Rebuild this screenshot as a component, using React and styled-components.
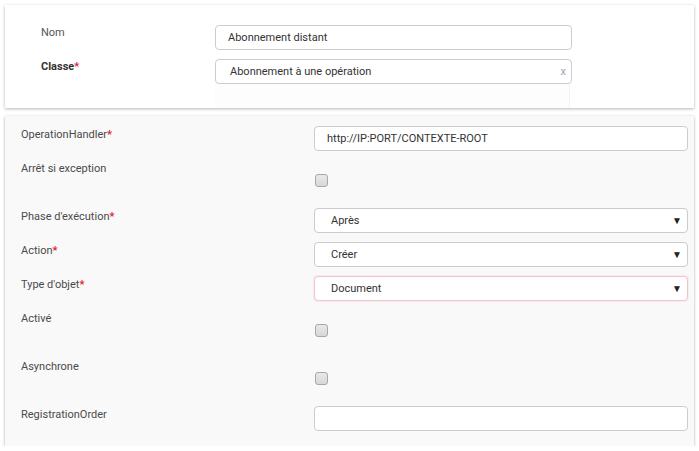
import styled, { createGlobalStyle, css } from "styled-components";

const GlobalStyle = createGlobalStyle`
  html, body {
    margin: 0;
    padding: 0;
    background-color: #ffffff;
    font-family: Roboto, "Liberation Sans", Arial, sans-serif;
  }
  * {
    box-sizing: border-box;
  }
`;

const fields = [
  { label: "OperationHandler", required: true, type: "text", value: "http://IP:PORT/CONTEXTE-ROOT" },
  { label: "Arrêt si exception", type: "checkbox" },
  { label: "Phase d'exécution", required: true, type: "select", value: "Après" },
  { label: "Action", required: true, type: "select", value: "Créer" },
  { label: "Type d'objet", required: true, type: "select", value: "Document", invalid: true },
  { label: "Activé", type: "checkbox" },
  { label: "Asynchrone", type: "checkbox" },
  { label: "RegistrationOrder", type: "text", value: "" },
];

export default function App() {
  function renderField(f) {
    if (f.type === "checkbox") {
      return <CheckBox type="checkbox" readOnly />;
    }
    if (f.type === "select") {
      return (
        <Select invalid={f.invalid}>
          <span>{f.value}</span>
          <Arrow>▼</Arrow>
        </Select>
      );
    }
    return <TextInput defaultValue={f.value} />;
  }

  return (
    <Page>
      <GlobalStyle />
      <HeaderCard>
        <HeaderRow>
          <HeaderLabel>Nom</HeaderLabel>
          <HeaderInput defaultValue="Abonnement distant" />
        </HeaderRow>
        <HeaderRow>
          <HeaderLabel bold>
            Classe<Star>*</Star>
          </HeaderLabel>
          <FieldStack>
            <ClassBox>
              <span>Abonnement à une opération</span>
              <Clear>x</Clear>
            </ClassBox>
            <Suggestions />
          </FieldStack>
        </HeaderRow>
      </HeaderCard>

      <FormCard>
        {fields.map((f, index) => (
          <Row key={index}>
            <Label>
              {f.label}
              {f.required && <Star>*</Star>}
            </Label>
            <Field checkbox={f.type === "checkbox"}>{renderField(f)}</Field>
          </Row>
        ))}
      </FormCard>
    </Page>
  );
}

const Page = styled.div`
  display: flex;
  flex-direction: column;
  gap: 8px;
  padding: 5px 5px 0 5px;
  width: 699px;
`;

const HeaderCard = styled.div`
  display: flex;
  flex-direction: column;
  gap: 9px;
  height: 103px;
  background-color: #ffffff;
  padding: 20px 0 0 36px;
  box-shadow: 0 1px 3px rgba(0, 0, 0, 0.28), 0 0 1px rgba(0, 0, 0, 0.08);
`;

const HeaderRow = styled.div`
  display: grid;
  grid-template-columns: 174px 357px;
  align-items: start;
`;

const HeaderLabel = styled.div`
  font-size: 11px;
  line-height: 15px;
  font-weight: ${(props) => (props.bold ? 700 : 400)};
  color: ${(props) => (props.bold ? "#333333" : "#555555")};
`;

const Star = styled.span`
  color: #e0242c;
  font-weight: 700;
`;

const inputBase = css`
  height: 25px;
  width: 100%;
  border: 1px solid #cccccc;
  border-radius: 4px;
  background-color: #ffffff;
  font-family: Roboto, "Liberation Sans", Arial, sans-serif;
  font-size: 11px;
  color: #333333;
  outline: none;
`;

const HeaderInput = styled.input`
  ${inputBase}
  padding: 0 12px;
`;

const FieldStack = styled.div`
  display: flex;
  flex-direction: column;
`;

const ClassBox = styled.div`
  ${inputBase}
  display: flex;
  align-items: center;
  justify-content: space-between;
  padding: 0 5px 0 14px;
`;

const Clear = styled.span`
  color: #9aa4bb;
  font-size: 11px;
`;

const Suggestions = styled.div`
  height: 24px;
  width: 355px;
  background-color: #fdfdfd;
  border-right: 1px solid #f3f3f3;
`;

const FormCard = styled.div`
  display: flex;
  flex-direction: column;
  gap: 9px;
  height: 330px;
  background-color: #f9f9f9;
  padding: 10px 6px 0 16px;
  box-shadow: 0 1px 3px rgba(0, 0, 0, 0.28), 0 0 1px rgba(0, 0, 0, 0.08);
`;

const Row = styled.div`
  display: grid;
  grid-template-columns: 293px 1fr;
  align-items: start;
`;

const Label = styled.div`
  font-size: 11px;
  line-height: 15px;
  padding-top: 1px;
  color: #4a4a4a;
`;

const Field = styled.div`
  display: flex;
  align-items: center;
  padding: ${(props) => (props.checkbox ? "14px 0 12px 1px" : "0")};
`;

const TextInput = styled.input`
  ${inputBase}
  padding: 0 12px;
`;

const Select = styled.div`
  ${inputBase}
  display: flex;
  align-items: center;
  justify-content: space-between;
  padding: 0 5px 0 16px;
  border-color: ${(props) => (props.invalid ? "#f2c3cf" : "#cccccc")};
  box-shadow: ${(props) =>
    props.invalid ? "0 0 2px rgba(236, 120, 150, 0.35)" : "none"};
`;

const Arrow = styled.span`
  font-size: 10px;
  color: #222222;
`;

const CheckBox = styled.input`
  appearance: none;
  margin: 0;
  width: 13px;
  height: 13px;
  border: 1px solid #a8a8a8;
  border-radius: 3px;
  background: linear-gradient(#e9e9e9, #d7d7d7);
`;
